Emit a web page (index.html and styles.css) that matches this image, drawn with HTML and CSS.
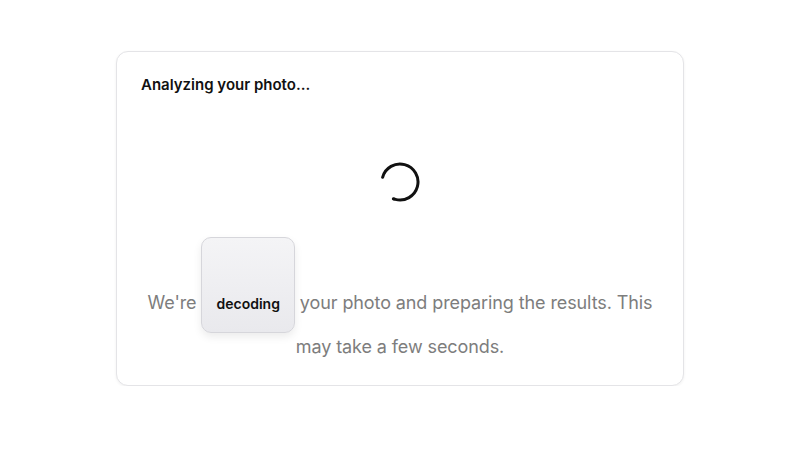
FILE: index.html
```html
<!DOCTYPE html>
<html lang="en">
<head>
<meta charset="utf-8">
<title>Analyzing</title>
<link rel="stylesheet" href="styles.css">
</head>
<body>
<div class="page">
  <section class="card">
    <h1 class="title">Analyzing your photo...</h1>
    <div class="spinner">
      <svg width="40" height="40" viewBox="0 0 40 40">
        <circle cx="20" cy="20" r="18" fill="none" stroke="#111" stroke-width="3" stroke-linecap="round" stroke-dasharray="86.4 113.1" transform="rotate(195 20 20)"/>
      </svg>
    </div>
    <p class="message">We're <span class="word">decoding</span> your photo and preparing the results. This may take a few seconds.</p>
  </section>
</div>
</body>
</html>
```
FILE: styles.css
```css
html, body {
  margin: 0;
  padding: 0;
  background: #ffffff;
}
body {
  font-family: Inter, "Noto Sans", sans-serif;
}
.page {
  width: 800px;
  padding-top: 51px;
}
.card {
  width: 568px;
  box-sizing: border-box;
  margin: 0 auto;
  padding: 24px 24px 25px;
  border: 1px solid #e4e4e7;
  border-radius: 12px;
  background: #fff;
  box-shadow: 0 1px 3px rgba(0,0,0,0.06);
}
.title {
  margin: 0;
  font-size: 15px;
  line-height: 18px;
  font-weight: 600;
  color: #111;
  letter-spacing: 0;
}
.spinner {
  display: flex;
  justify-content: center;
  margin-top: 68px;
  height: 40px;
}
.message {
  margin: 35px 0 0;
  text-align: center;
  font-size: 18px;
  line-height: 27px;
  color: #7d7d7d;
  letter-spacing: -0.1px;
}
.word {
  display: inline-block;
  padding: 56px 14px 18px;
  font-size: 14px;
  line-height: 20px;
  font-weight: 600;
  color: #111;
  letter-spacing: 0;
  border: 1px solid #d6d6db;
  border-radius: 10px;
  background: linear-gradient(#f4f4f6, #e9e9ed);
  box-shadow: 0 4px 8px rgba(0,0,0,0.08);
}
```
